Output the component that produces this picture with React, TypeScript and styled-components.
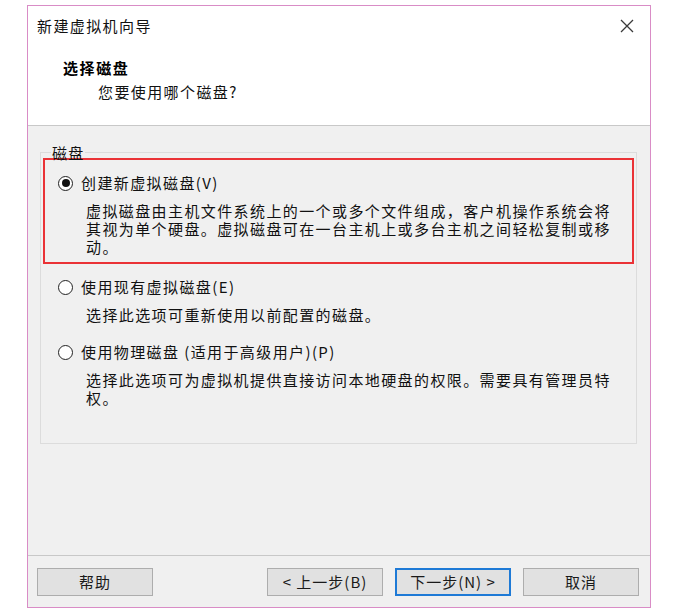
import React from "react";
import styled, { createGlobalStyle } from "styled-components";

const Global = createGlobalStyle`
  * { box-sizing: border-box; }
  html, body { margin: 0; padding: 0; background: #ffffff; }
  body {
    font-family: "Noto Sans CJK SC", "Noto Sans", "Liberation Sans", sans-serif;
    color: #111;
  }
`;

const Page = styled.div`
  padding: 5px 0 0 27px;
`;

const Window = styled.div`
  width: 624px;
  height: 603px;
  border: 1px solid #d98cc6;
  display: flex;
  flex-direction: column;
  background: #f0f0f0;
`;

const Header = styled.div`
  height: 120px;
  background: #ffffff;
  border-bottom: 1px solid #c8c8c8;
  display: flex;
  flex-direction: column;
`;

const TitleBar = styled.div`
  height: 38px;
  display: flex;
  align-items: center;
  justify-content: space-between;
  padding: 1px 16px 0 9px;
`;

const TitleText = styled.span`
  font-size: 15px;
  letter-spacing: 1.4px;
  line-height: 18px;
  color: #111;
`;

const CloseIcon = styled.svg`
  width: 14px;
  height: 14px;
  display: block;
`;

const Heading = styled.div`
  margin: 14px 0 0 35px;
  font-size: 15px;
  font-weight: 700;
  letter-spacing: 1.6px;
  line-height: 20px;
  color: #000;
`;

const SubHeading = styled.div`
  margin: 4px 0 0 70px;
  font-size: 15px;
  letter-spacing: 1.4px;
  line-height: 20px;
  color: #111;
`;

const Body = styled.div`
  height: 429px;
  padding: 19px 13px 0 12px;
`;

const GroupBox = styled.fieldset`
  margin: 0;
  padding: 0;
  height: 299px;
  border: 1px solid #dcdcdc;
  min-width: 0;
`;

const Legend = styled.legend`
  margin-left: 10px;
  padding: 0 1px;
  font-size: 15px;
  line-height: 15px;
  letter-spacing: 1.2px;
  color: #111;
`;

const Highlight = styled.div`
  margin: -2px 2px 0;
  border: 2px solid #ea3236;
  padding: 14px 0 6px 13px;
`;

const Option = styled.div<{ $inset: number; $gap: number }>`
  padding-left: ${(p) => p.$inset}px;
  margin-top: ${(p) => p.$gap}px;
`;

const OptionRow = styled.label`
  display: flex;
  align-items: center;
  gap: 8px;
  height: 18px;
  font-size: 15px;
  letter-spacing: 1.4px;
  line-height: 18px;
  color: #111;
`;

const Radio = styled.span<{ $checked: boolean }>`
  width: 15px;
  height: 15px;
  border-radius: 50%;
  border: 1px solid #222;
  background: #fff;
  flex: none;
  display: flex;
  align-items: center;
  justify-content: center;
  &::after {
    content: "";
    width: 8px;
    height: 8px;
    border-radius: 50%;
    background: ${(p) => (p.$checked ? "#111" : "transparent")};
  }
`;

const Description = styled.p`
  margin: 10px 0 0 28px;
  width: 530px;
  font-size: 15px;
  letter-spacing: 1.4px;
  line-height: 18px;
  color: #111;
`;

const Footer = styled.div`
  height: 52px;
  border-top: 1px solid #c8c8c8;
  padding: 12px 11px 10px 9px;
  display: flex;
  align-items: flex-start;
`;

const Spacer = styled.div`
  flex: 1;
`;

const Button = styled.button<{ $primary?: boolean }>`
  width: 116px;
  height: 28px;
  background: #e1e1e1;
  border: ${(p) => (p.$primary ? "2px solid #1e7ad6" : "1px solid #adadad")};
  font-family: inherit;
  font-size: 15px;
  letter-spacing: 1px;
  line-height: 18px;
  color: #1a1a1a;
  padding: 0;
  display: flex;
  align-items: center;
  justify-content: center;
`;

const ButtonGroup = styled.div`
  display: flex;
  gap: 12px;
`;

export default function App() {
  return (
    <>
      <Global />
      <Page>
        <Window>
          <Header>
            <TitleBar>
              <TitleText>新建虚拟机向导</TitleText>
              <CloseIcon viewBox="0 0 14 14">
                <path d="M1 1 L13 13 M13 1 L1 13" stroke="#3a3a3a" strokeWidth="1.3" fill="none" />
              </CloseIcon>
            </TitleBar>
            <Heading>选择磁盘</Heading>
            <SubHeading>您要使用哪个磁盘?</SubHeading>
          </Header>
          <Body>
            <GroupBox>
              <Legend>磁盘</Legend>
              <Highlight>
                <Option $inset={0} $gap={0}>
                  <OptionRow>
                    <Radio $checked={true} />
                    创建新虚拟磁盘(V)
                  </OptionRow>
                  <Description>
                    虚拟磁盘由主机文件系统上的一个或多个文件组成，客户机操作系统会将其视为单个硬盘。虚拟磁盘可在一台主机上或多台主机之间轻松复制或移动。
                  </Description>
                </Option>
              </Highlight>
              <Option $inset={17} $gap={14}>
                <OptionRow>
                  <Radio $checked={false} />
                  使用现有虚拟磁盘(E)
                </OptionRow>
                <Description>选择此选项可重新使用以前配置的磁盘。</Description>
              </Option>
              <Option $inset={17} $gap={19}>
                <OptionRow>
                  <Radio $checked={false} />
                  使用物理磁盘 (适用于高级用户)(P)
                </OptionRow>
                <Description>
                  选择此选项可为虚拟机提供直接访问本地硬盘的权限。需要具有管理员特权。
                </Description>
              </Option>
            </GroupBox>
          </Body>
          <Footer>
            <Button>帮助</Button>
            <Spacer />
            <ButtonGroup>
              <Button>&lt; 上一步(B)</Button>
              <Button $primary>下一步(N) &gt;</Button>
              <Button>取消</Button>
            </ButtonGroup>
          </Footer>
        </Window>
      </Page>
    </>
  );
}
